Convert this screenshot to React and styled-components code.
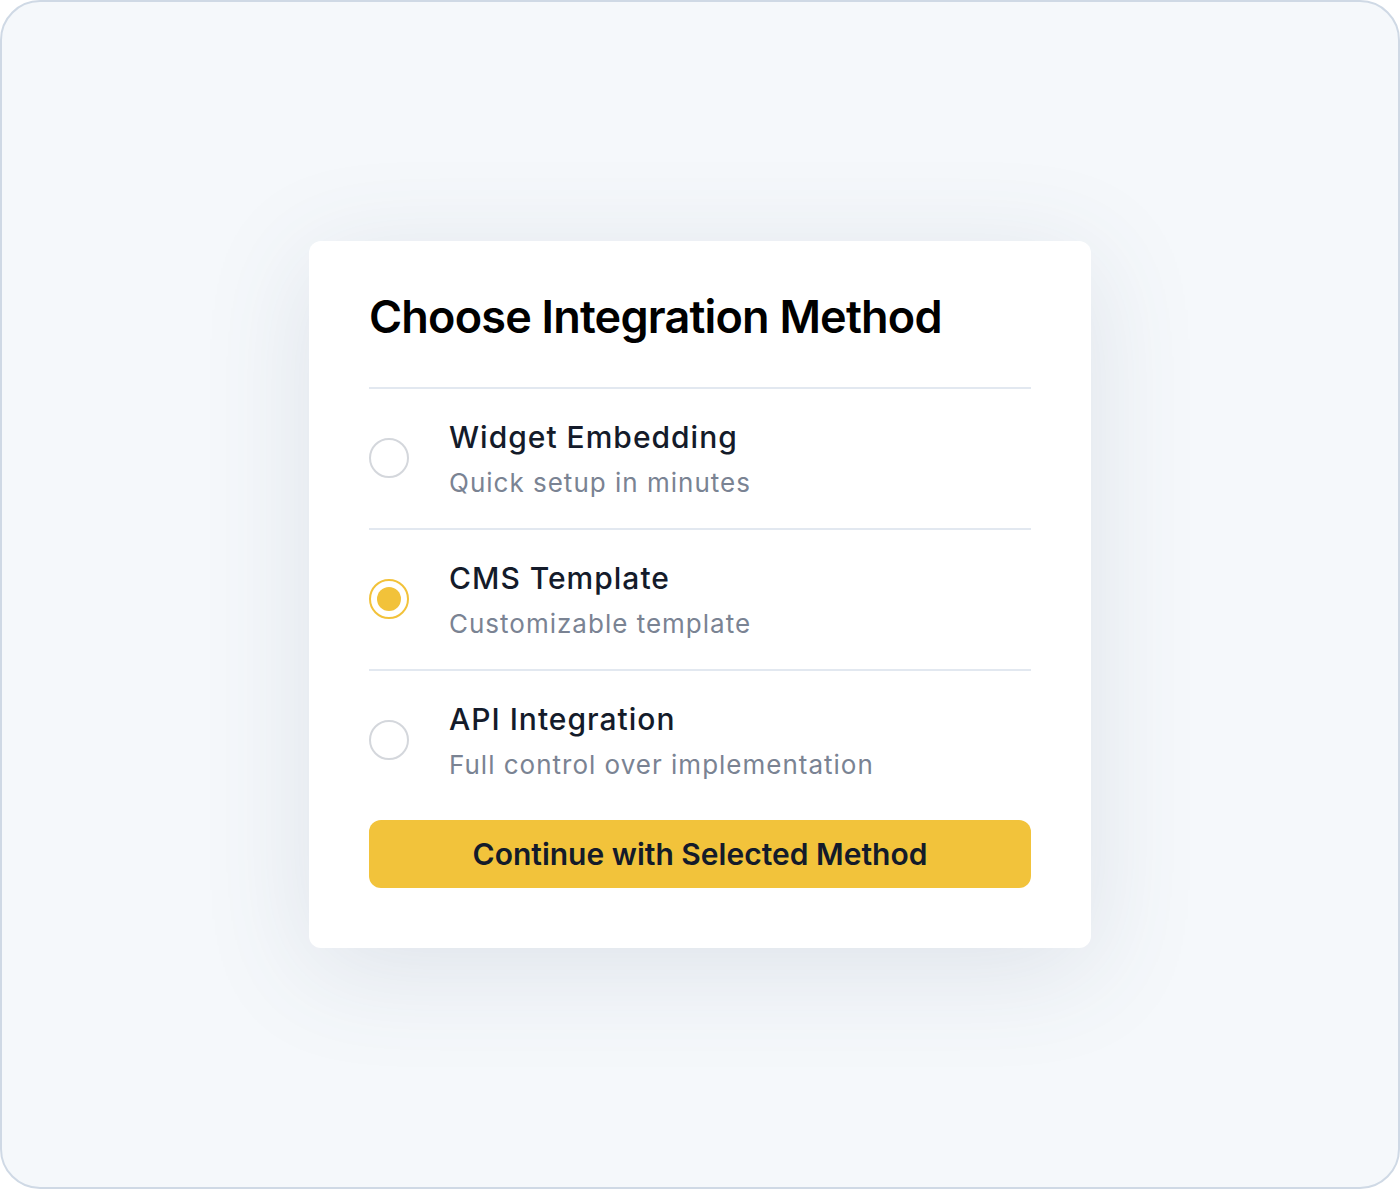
import React, { useState } from "react";
import styled, { createGlobalStyle } from "styled-components";

const GlobalStyle = createGlobalStyle`
  * { box-sizing: border-box; }
  html, body { margin: 0; padding: 0; }
  body {
    font-family: Inter, "Noto Sans", "Liberation Sans", sans-serif;
    -webkit-font-smoothing: antialiased;
  }
`;

const methods = [
  { id: "widget", title: "Widget Embedding", desc: "Quick setup in minutes" },
  { id: "cms", title: "CMS Template", desc: "Customizable template" },
  { id: "api", title: "API Integration", desc: "Full control over implementation" },
];

const App = () => {
  const [selected, setSelected] = useState("cms");

  return (
    <>
      <GlobalStyle />
      <Frame>
        <Card>
          <Title>Choose Integration Method</Title>
          <List>
            {methods.map((m) => (
              <Row key={m.id} onClick={() => setSelected(m.id)}>
                <Radio $active={selected === m.id} />
                <Text>
                  <Name>{m.title}</Name>
                  <Desc>{m.desc}</Desc>
                </Text>
              </Row>
            ))}
          </List>
          <Button>Continue with Selected Method</Button>
        </Card>
      </Frame>
    </>
  );
};

export default App;

const Frame = styled.div`
  height: 1189px;
  width: 1400px;
  border: 2px solid #cfd9e5;
  border-radius: 40px;
  background: #f5f8fb;
  display: flex;
  align-items: center;
  justify-content: center;
`;

const Card = styled.div`
  width: 782px;
  background: #ffffff;
  border-radius: 12px;
  padding: 42px 60px 60px;
  box-shadow: 0 20px 110px rgba(71, 85, 115, 0.13);
  display: flex;
  flex-direction: column;
`;

const Title = styled.h1`
  margin: 0 0 36px;
  font-size: 45px;
  line-height: 1.5;
  font-weight: 600;
  color: #000;
  letter-spacing: -0.8px;
`;

const List = styled.div`
  display: flex;
  flex-direction: column;
`;

const Row = styled.div`
  display: flex;
  align-items: center;
  gap: 40px;
  padding: 26px 0;
  border-top: 2px solid #e2e8f0;
  cursor: pointer;
`;

const Radio = styled.span`
  flex: none;
  width: 40px;
  height: 40px;
  border-radius: 50%;
  border: 2px solid ${(p) => (p.$active ? "#f2c23a" : "#d4d7dc")};
  display: flex;
  align-items: center;
  justify-content: center;

  &::after {
    content: "";
    width: 24px;
    height: 24px;
    border-radius: 50%;
    background: #f2c23a;
    display: ${(p) => (p.$active ? "block" : "none")};
  }
`;

const Text = styled.div`
  display: flex;
  flex-direction: column;
  gap: 3px;
`;

const Name = styled.span`
  font-size: 30px;
  line-height: 45px;
  font-weight: 500;
  letter-spacing: 1px;
  color: #141b2a;
`;

const Desc = styled.span`
  font-size: 26px;
  line-height: 39px;
  letter-spacing: 1px;
  color: #7a8393;
`;

const Button = styled.button`
  margin-top: 10px;
  height: 68px;
  border: none;
  border-radius: 12px;
  background: #f2c33b;
  color: #141b2a;
  font-family: inherit;
  font-size: 30px;
  font-weight: 600;
  cursor: pointer;
`;
